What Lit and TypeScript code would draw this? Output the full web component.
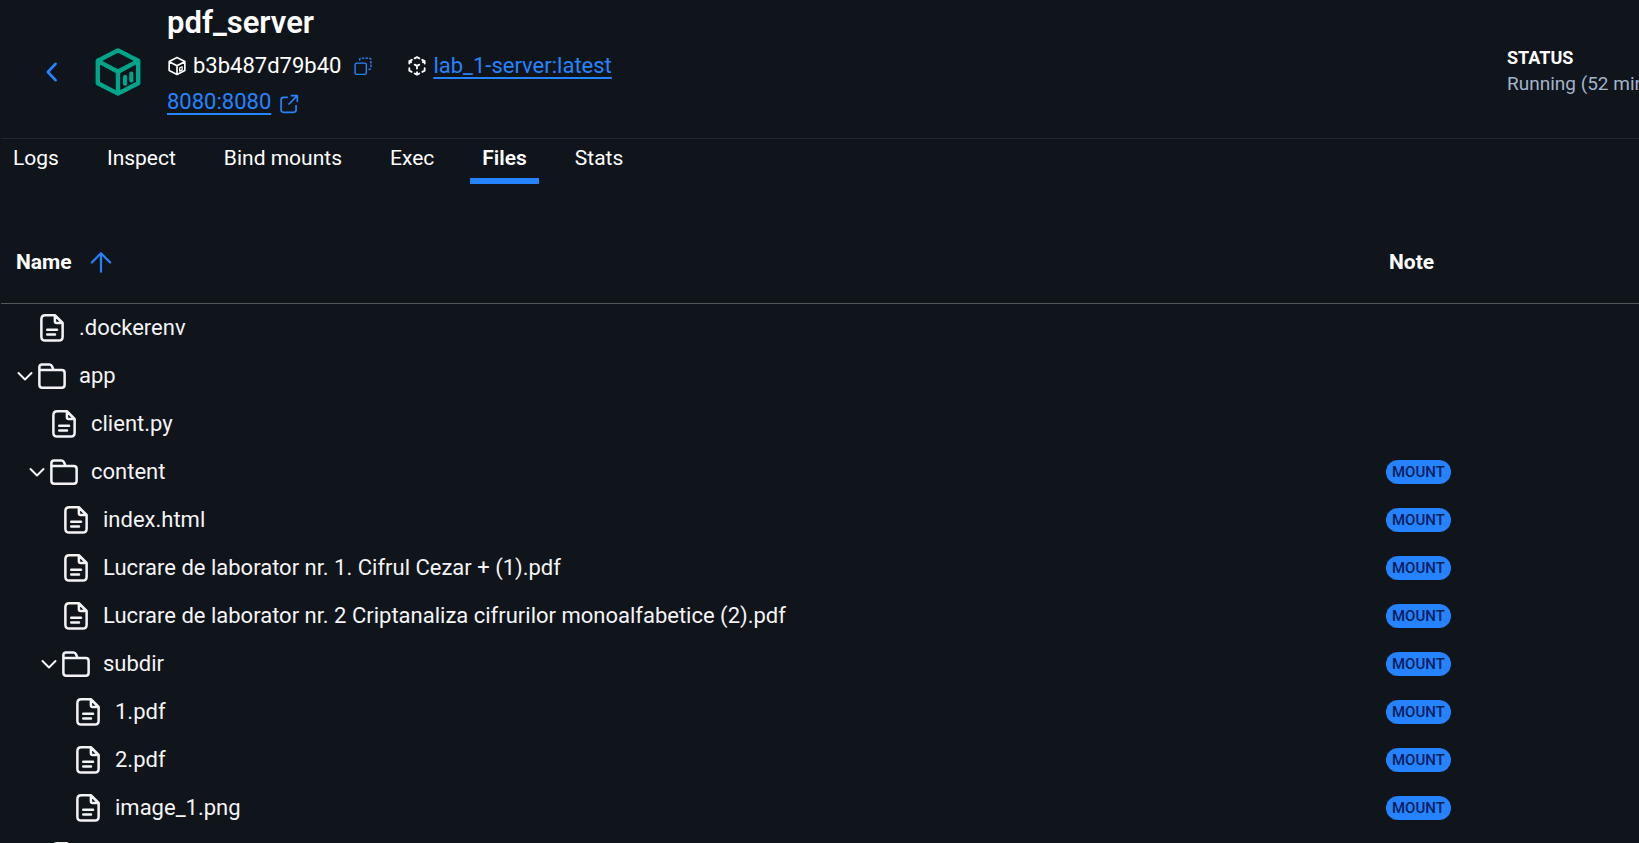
import { LitElement, html, css, svg, nothing } from "lit";
import { customElement, property, state } from "lit/decorators.js";
import { classMap } from "lit/directives/class-map.js";
import { styleMap } from "lit/directives/style-map.js";

interface Entry {
  name: string;
  depth: number;
  folder?: boolean;
  mount?: boolean;
}

const ENTRIES: Entry[] = [
  { name: ".dockerenv", depth: 0 },
  { name: "app", depth: 0, folder: true },
  { name: "client.py", depth: 1 },
  { name: "content", depth: 1, folder: true, mount: true },
  { name: "index.html", depth: 2, mount: true },
  { name: "Lucrare de laborator nr. 1. Cifrul Cezar + (1).pdf", depth: 2, mount: true },
  { name: "Lucrare de laborator nr. 2 Criptanaliza cifrurilor monoalfabetice (2).pdf", depth: 2, mount: true },
  { name: "subdir", depth: 2, folder: true, mount: true },
  { name: "1.pdf", depth: 3, mount: true },
  { name: "2.pdf", depth: 3, mount: true },
  { name: "image_1.png", depth: 3, mount: true },
  { name: "server.py", depth: 1 },
];

const TABS = ["Logs", "Inspect", "Bind mounts", "Exec", "Files", "Stats"];

const icons = {
  back: svg`<path d="M16 3 L7.5 12 L16 21" stroke-width="2.8" />`,
  container: svg`
    <path d="M12 1.6 L21.7 6.6 V17.4 L12 22.4 L2.3 17.4 V6.6 Z M2.5 6.8 L12 11.9 L21.5 6.8 M12 11.9 V22" stroke-width="2.1" />
    <path d="M15.4 14.3 V17.6 M18.4 12.8 V16.1" stroke-width="2" />`,
  containerSmall: svg`
    <path d="M12 1.8 L21.4 6.6 V17.4 L12 22.2 L2.6 17.4 V6.6 Z M2.8 6.8 L12 11.8 L21.2 6.8 M12 11.8 V22" stroke-width="2" />
    <path d="M15.2 14.4 V18.2 M18.2 12.9 V16.7 M15.2 14.4 L18.2 12.9 M15.2 18.2 L18.2 16.7" stroke-width="1.5" />`,
  image: svg`
    <path d="M9.2 2.8 L12 1.4 L14.8 2.8 M18.2 4.6 L21.2 6.2 V9 M21.2 14.6 V17.6 L18.4 19 M14.8 21 L12 22.5 L9.2 21 M5.6 19 L2.8 17.6 V14.6 M2.8 9 V6.2 L5.8 4.6 M2.8 6.2 L5 7.4 M21.2 6.2 L19 7.4 M12 22 V19.4 M9.2 10.4 L12 11.9 L14.8 10.4 M12 11.9 V15" stroke-width="2.2" />`,
  copy: svg`
    <rect x="2.5" y="8.5" width="13.5" height="13.5" rx="2" stroke-width="1.7" />
    <path d="M8 5.5 V4.5 Q8 2.5 10 2.5 H19.5 Q21.5 2.5 21.5 4.5 V14 Q21.5 16 19.5 16 H18.5" stroke-width="1.7" stroke-linecap="butt" stroke-dasharray="3 1.4" />`,
  external: svg`
    <path d="M10 4 H5.5 Q2.5 4 2.5 7 V19 Q2.5 22 5.5 22 H17.5 Q20.5 22 20.5 19 V14 M15 2 H22 V9 M22 2 L12 12" stroke-width="2" />`,
  up: svg`<path d="M12 22.5 V2.5 M2 12.5 L12 2.5 L22 12.5" stroke-width="2.4" />`,
  chevron: svg`<path d="M5.5 9 L12 15.5 L18.5 9" stroke-width="2" />`,
  file: svg`
    <path d="M14.3 1.8 H6.6 Q3.5 1.8 3.5 4.9 V18.9 Q3.5 22 6.6 22 H17.4 Q20.5 22 20.5 18.9 V8 Z M14.3 1.8 V6.6 Q14.3 8 15.7 8 H20.5 M8.2 13.4 H16 M8.2 17.2 H14.4" stroke-width="2" />`,
  folder: svg`
    <path d="M1.9 8 V4.9 Q1.9 2.7 4.1 2.7 H10 Q11.4 2.7 12 4.2 L13.2 7.1 H19.8 Q22.1 7.1 22.1 9.4 V18.9 Q22.1 21.3 19.8 21.3 H4.2 Q1.9 21.3 1.9 18.9 Z M2 7.1 H13.2" stroke-width="2" />`,
};

@customElement("ui-icon")
class UiIcon extends LitElement {
  @property() name: keyof typeof icons = "file";

  static styles = css`
    :host { display: inline-block; flex: none; width: 24px; height: 24px; }
    .glyph { display: block; width: 100%; height: 100%; fill: none; stroke: currentColor; stroke-linecap: round; stroke-linejoin: round; }
  `;

  render() {
    return html`<svg class="glyph" viewBox="0 0 24 24" aria-hidden="true">${icons[this.name]}</svg>`;
  }
}

@customElement("container-header")
class ContainerHeader extends LitElement {
  static styles = css`
    :host { display: flex; align-items: center; height: 139px; box-sizing: border-box; border-bottom: 1px solid #24282e; overflow: hidden; font-size: 22px; }
    .back { flex: none; margin: 6px 30px 0 40px; padding: 0; border: 0; background: none; color: #2683ff; cursor: pointer; }
    .back ui-icon { display: block; width: 22px; height: 22px; }
    .logo { width: 50px; height: 50px; margin-top: 6px; color: #00a58c; }
    .info { flex: 1; min-width: 0; align-self: flex-start; padding: 4px 0 0 24px; }
    .title { margin: 0; font-size: 31px; line-height: 38px; font-weight: 600; }
    .line { display: flex; align-items: center; height: 36px; margin-top: 6px; }
    .line + .line { margin-top: 0; }
    .small { width: 20px; height: 20px; margin-right: 6px; }
    .link { color: #2683ff; text-underline-offset: 4px; text-decoration-thickness: 2px; }
    .copy { padding: 0; margin: 0 34px 0 12px; border: 0; background: none; color: #2683ff; cursor: pointer; }
    .copy ui-icon { display: block; width: 20px; height: 20px; }
    .open { width: 20px; height: 20px; margin: 4px 0 0 8px; color: #2683ff; }
    .status { flex: none; width: 132px; margin-top: 4px; font-size: 18px; line-height: 26px; white-space: nowrap; }
    .label { font-weight: 700; }
    .value { color: #a3b3c9; font-size: 19px; }
  `;

  render() {
    return html`
      <button class="back" aria-label="Back"><ui-icon name="back"></ui-icon></button>
      <ui-icon class="logo" name="container"></ui-icon>
      <div class="info">
        <h1 class="title">pdf_server</h1>
        <div class="line">
          <ui-icon class="small" name="containerSmall"></ui-icon>
          <span>b3b487d79b40</span>
          <button class="copy" aria-label="Copy"><ui-icon name="copy"></ui-icon></button>
          <ui-icon class="small" name="image"></ui-icon>
          <a class="link" href="#image">lab_1-server:latest</a>
        </div>
        <div class="line">
          <a class="link" href="#port">8080:8080</a>
          <ui-icon class="open" name="external"></ui-icon>
        </div>
      </div>
      <div class="status">
        <div class="label">STATUS</div>
        <div class="value">Running (52 minutes ago)</div>
      </div>
    `;
  }
}

@customElement("file-table")
class FileTable extends LitElement {
  static styles = css`
    :host { display: block; }
    .table { width: 100%; border-collapse: separate; border-spacing: 0; table-layout: fixed; }
    .note-col { width: 256px; }
    .head { box-sizing: border-box; height: 84px; padding: 0 0 0 15px; border-bottom: 1px solid #54575b; text-align: left; font-weight: 700; font-size: 21px; }
    .head.note { padding-left: 6px; }
    .sort { display: inline-flex; align-items: center; gap: 18px; padding: 0; border: 0; background: none; color: inherit; font: inherit; cursor: pointer; }
    .sort ui-icon { width: 22px; height: 22px; color: #2683ff; }
    .cell { height: 48px; padding: 0; font-size: 22px; }
    .cell.note { padding-left: 3px; }
    .entry { display: flex; align-items: center; color: #f4f4f6; white-space: nowrap; }
    .slot { flex: none; width: 24px; height: 24px; padding: 0; border: 0; background: none; color: inherit; }
    button.slot { cursor: pointer; }
    .slot ui-icon { display: block; }
    .kind { width: 30px; height: 30px; margin-right: 12px; }
    .badge { display: flex; align-items: center; width: fit-content; height: 24px; padding: 0 6px; border-radius: 12px; background: #2683ff; color: #06205c; font-size: 15px; font-weight: 500; }
  `;

  render() {
    return html`
      <table class="table">
        <colgroup><col /><col class="note-col" /></colgroup>
        <thead>
          <tr>
            <th class="head" scope="col" aria-sort="ascending">
              <button class="sort">Name<ui-icon name="up"></ui-icon></button>
            </th>
            <th class="head note" scope="col">Note</th>
          </tr>
        </thead>
        <tbody>
          ${ENTRIES.map(
            (e) => html`
              <tr>
                <td class="cell">
                  <div class="entry" style=${styleMap({ paddingLeft: `${12 + e.depth * 12}px` })}>
                    ${e.folder
                      ? html`<button class="slot" aria-label="Collapse ${e.name}" aria-expanded="true"><ui-icon name="chevron"></ui-icon></button>`
                      : html`<span class="slot"></span>`}
                    <ui-icon class="kind" name=${e.folder ? "folder" : "file"}></ui-icon>
                    <span>${e.name}</span>
                  </div>
                </td>
                <td class="cell note">${e.mount ? html`<span class="badge">MOUNT</span>` : nothing}</td>
              </tr>
            `,
          )}
        </tbody>
      </table>
    `;
  }
}

@customElement("app-root")
class AppRoot extends LitElement {
  @state() private tab = "Files";

  static styles = css`
    :host { display: block; height: 100vh; overflow: hidden; box-sizing: border-box; padding-left: 1px; background: #10151b; color: #fff; font-family: Roboto, sans-serif; font-size: 21px; line-height: 28px; }
    .tabs { display: flex; gap: 24px; margin-bottom: 36px; }
    .tab { padding: 5px 12px 6px; border: 0; border-bottom: 6px solid transparent; background: none; color: #fff; font: inherit; cursor: pointer; }
    .tab.active { border-bottom-color: #2683ff; font-weight: 600; }
  `;

  render() {
    return html`
      <container-header></container-header>
      <nav class="tabs" role="tablist">
        ${TABS.map(
          (t) => html`<button
            class=${classMap({ tab: true, active: t === this.tab })}
            role="tab"
            aria-selected=${t === this.tab ? "true" : "false"}
            @click=${() => (this.tab = t)}
          >${t}</button>`,
        )}
      </nav>
      <file-table></file-table>
    `;
  }
}
